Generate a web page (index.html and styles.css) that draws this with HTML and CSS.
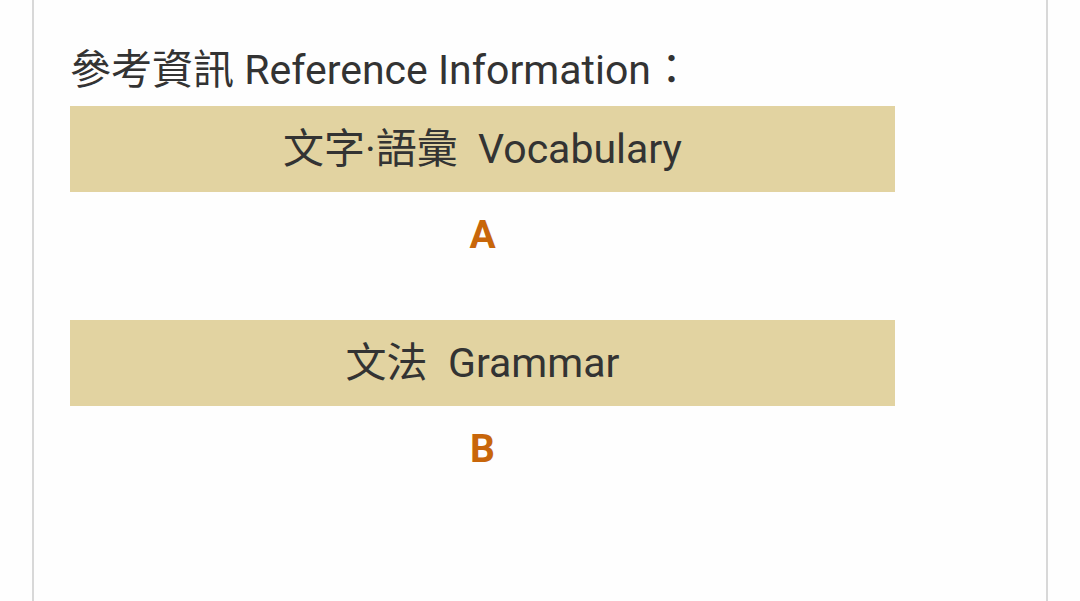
FILE: index.html
```html
<!DOCTYPE html>
<html lang="zh-Hant">
<head>
  <meta charset="UTF-8">
  <title>Reference Information</title>
  <meta name="viewport" content="width=device-width, initial-scale=1.0">
  <link rel="stylesheet" href="styles.css">
</head>
<body>
  <div class="card">
    <h2 class="title">參考資訊 Reference Information：</h2>

    <div class="section-bar">文字·語彙&nbsp;&nbsp;Vocabulary</div>
    <div class="answer">A</div>

    <div class="section-bar">文法&nbsp;&nbsp;Grammar</div>
    <div class="answer">B</div>
  </div>
</body>
</html>
```

FILE: styles.css
```css
body {
  margin: 0;
  background-color: #fefefe;
  font-family: Roboto, "Noto Sans CJK TC", sans-serif;
  color: #333;
}
.card {
  margin-left: 32px;
  width: 1016px;
  min-height: 601px;
  box-sizing: border-box;
  border-left: 2px solid #d8d8d8;
  border-right: 2px solid #d8d8d8;
  padding: 42px 0 0 36px;
}
.title {
  margin: 0 0 8px;
  font-size: 41px;
  font-weight: normal;
  line-height: 56px;
  color: #333;
}
.section-bar {
  width: 825px;
  height: 86px;
  line-height: 86px;
  background-color: #e2d3a1;
  text-align: center;
  font-size: 41px;
  color: #333;
}
.answer {
  width: 825px;
  height: 86px;
  line-height: 86px;
  margin-bottom: 42px;
  text-align: center;
  font-size: 39px;
  font-weight: bold;
  color: #c8660a;
}
```
